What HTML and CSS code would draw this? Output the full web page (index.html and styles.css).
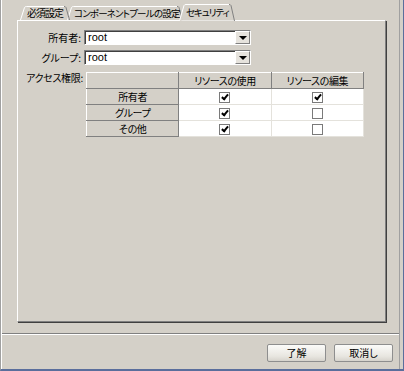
FILE: index.html
```html
<!DOCTYPE html>
<html lang="ja">
<head>
    <meta charset="UTF-8">
    <title>セキュリティ</title>
    <link rel="stylesheet" href="styles.css">
</head>
<body>
<div class="window">
    <div class="main">
        <div class="tabs">
            <div class="tab tab-first">
                <svg class="tab-shape" width="50" height="14">
                    <path d="M0.5 14 L4.5 1.5 Q5 0.5 6.5 0.5 H44" class="hi"/>
                    <path d="M44 0.5 Q45.5 0.5 46 1.5 L49.5 14" class="lo"/>
                </svg>
                <span class="tab-label">必須設定</span>
            </div>
            <div class="tab tab-second">
                <svg class="tab-shape" width="116" height="14">
                    <path d="M0.5 14 L4.5 1.5 Q5 0.5 6.5 0.5 H110" class="hi"/>
                    <path d="M110 0.5 Q111.5 0.5 112 1.5 L115.5 14" class="lo"/>
                </svg>
                <span class="tab-label">コンポーネントプールの設定</span>
            </div>
            <div class="tab tab-active">
                <svg class="tab-shape" width="56" height="18">
                    <path d="M0.5 17 L5 1.5 Q5.5 0.5 7 0.5 H50" class="hi"/>
                    <path d="M50 0.5 Q51.5 0.5 52 1.5 L55.5 17" class="lo"/>
                    <path d="M1 17.5 H55" class="fill-line"/>
                </svg>
                <span class="tab-label">セキュリティ</span>
            </div>
        </div>
        <div class="panel">
            <div class="form-grid">
                <label class="field-label">所有者:</label>
                <div class="combo">
                    <span class="combo-value">root</span>
                    <span class="combo-btn"><span class="arrow"></span></span>
                </div>
                <label class="field-label">グループ:</label>
                <div class="combo">
                    <span class="combo-value">root</span>
                    <span class="combo-btn"><span class="arrow"></span></span>
                </div>
                <label class="field-label label-top">アクセス権限:</label>
                <table class="perm-table">
                    <tr>
                        <th></th>
                        <th>リソースの使用</th>
                        <th>リソースの編集</th>
                    </tr>
                    <tr>
                        <th>所有者</th>
                        <td><span class="check on"></span></td>
                        <td><span class="check on"></span></td>
                    </tr>
                    <tr>
                        <th>グループ</th>
                        <td><span class="check on"></span></td>
                        <td><span class="check"></span></td>
                    </tr>
                    <tr>
                        <th>その他</th>
                        <td><span class="check on"></span></td>
                        <td><span class="check"></span></td>
                    </tr>
                </table>
            </div>
        </div>
    </div>
    <div class="separator"></div>
    <div class="buttons">
        <button class="btn">了解</button>
        <button class="btn">取消し</button>
    </div>
</div>
</body>
</html>
```

FILE: styles.css
```css
body {
    margin: 0;
    background-color: #d4d0c8;
    font-family: "Noto Sans CJK JP", "DejaVu Sans", sans-serif;
    font-size: 11px;
    font-feature-settings: "palt";
    color: #000;
    overflow: hidden;
}
.window {
    width: 404px;
    height: 371px;
    box-sizing: border-box;
    border-left: 1px solid #a0a0a0;
    border-right: 1px solid #5a6e9c;
    border-bottom: 2px solid #5a6e9c;
    box-shadow: inset 1px 0 0 #ffffff, inset -3px 0 0 #d4d0c8, inset -4px 0 0 #a0a0a0;
}
.main {
    padding: 4px 0 0 16px;
}
.tabs {
    display: flex;
    align-items: flex-end;
    height: 16px;
    padding-left: 3px;
}
.tab {
    position: relative;
    height: 14px;
    display: flex;
    align-items: center;
}
.tab-shape {
    position: absolute;
    left: 0;
    top: 0;
}
.tab-shape path {
    fill: none;
    stroke-width: 1;
}
.tab-shape .hi {
    stroke: #ffffff;
    fill: #d4d0c8;
}
.tab-shape .lo {
    stroke: #808080;
}
.tab-shape .fill-line {
    stroke: #d4d0c8;
    stroke-width: 2;
}
.tab-label {
    position: relative;
    line-height: 14px;
    white-space: nowrap;
    font-size: 10px;
    padding-left: 7px;
}
.tab-first {
    width: 50px;
    z-index: 2;
}
.tab-first .tab-label {
    letter-spacing: -1px;
}
.tab-second {
    width: 116px;
    margin-left: -3px;
    z-index: 1;
}
.tab-second .tab-label {
    font-size: 9.5px;
    letter-spacing: -0.8px;
}
.tab-active {
    width: 56px;
    height: 18px;
    margin-left: -4px;
    margin-bottom: -2px;
    z-index: 3;
}
.tab-active .tab-label {
    line-height: 16px;
    padding-bottom: 2px;
    font-size: 9.5px;
    letter-spacing: -1.1px;
}
.panel {
    width: 369px;
    height: 302px;
    box-sizing: border-box;
    border-top: 1px solid #ffffff;
    border-left: 1px solid #ffffff;
    border-right: 1px solid #808080;
    border-bottom: 1px solid #808080;
    box-shadow: 1px 1px 0 #404040;
    padding: 9px 0 0 8px;
}
.form-grid {
    display: grid;
    grid-template-columns: 55px 280px;
    column-gap: 3px;
    row-gap: 5px;
    align-items: center;
}
.field-label {
    text-align: right;
    white-space: nowrap;
    line-height: 15px;
    font-size: 10px;
}
.label-top {
    align-self: start;
    letter-spacing: -0.3px;
}
.combo {
    display: flex;
    width: 167px;
    height: 15px;
    box-sizing: border-box;
    background-color: #fff;
    border-top: 1px solid #808080;
    border-left: 1px solid #808080;
    border-right: 1px solid #ffffff;
    border-bottom: 1px solid #ffffff;
    box-shadow: inset 1px 1px 0 #404040;
}
.combo-value {
    flex: 1;
    padding-left: 3px;
    line-height: 13px;
    font-family: "Liberation Sans", sans-serif;
    font-size: 11px;
}
.combo-btn {
    width: 15px;
    height: 13px;
    box-sizing: border-box;
    background-color: #e6e3dd;
    border-top: 1px solid #ffffff;
    border-left: 1px solid #ffffff;
    border-right: 1px solid #808080;
    border-bottom: 1px solid #808080;
    display: flex;
    align-items: center;
    justify-content: center;
}
.arrow {
    width: 0;
    height: 0;
    border-left: 4px solid transparent;
    border-right: 4px solid transparent;
    border-top: 4px solid #000;
}
.perm-table {
    margin-top: 2px;
    margin-left: 2px;
    border-collapse: collapse;
    border: 1px solid #808080;
    width: 278px;
    table-layout: fixed;
}
.perm-table th,
.perm-table td {
    height: 15px;
    padding: 0;
    text-align: center;
    font-weight: normal;
    line-height: 14px;
    font-size: 10px;
    letter-spacing: -0.4px;
}
.perm-table th {
    background-color: #d4d0c8;
    border-top: 1px solid #ffffff;
    border-left: 1px solid #ffffff;
    border-right: 1px solid #808080;
    border-bottom: 1px solid #808080;
}
.perm-table td {
    background-color: #fff;
    border: 1px solid #e4e2dc;
}
.check {
    display: inline-block;
    width: 11px;
    height: 11px;
    box-sizing: border-box;
    border: 1px solid #7a7a7a;
    background-color: #fff;
    vertical-align: middle;
    position: relative;
}
.check.on::after {
    content: "";
    position: absolute;
    left: 3px;
    top: 0;
    width: 2px;
    height: 5px;
    border-right: 2px solid #000;
    border-bottom: 2px solid #000;
    transform: rotate(40deg);
}
.separator {
    margin: 11px 4px 0 1px;
    height: 0;
    border-top: 1px solid #808080;
    border-bottom: 1px solid #ffffff;
}
.buttons {
    display: flex;
    justify-content: flex-end;
    gap: 8px;
    padding: 9px 10px 0 0;
}
.btn {
    width: 59px;
    height: 18px;
    padding: 0;
    font-family: "Noto Sans CJK JP", sans-serif;
    font-feature-settings: "palt";
    font-size: 10px;
    color: #000;
    background: linear-gradient(#fbfbf9, #e8e6e0 70%, #d6d3cc);
    border: 1px solid #8e8e8e;
    border-radius: 2px;
    line-height: 14px;
}
```
